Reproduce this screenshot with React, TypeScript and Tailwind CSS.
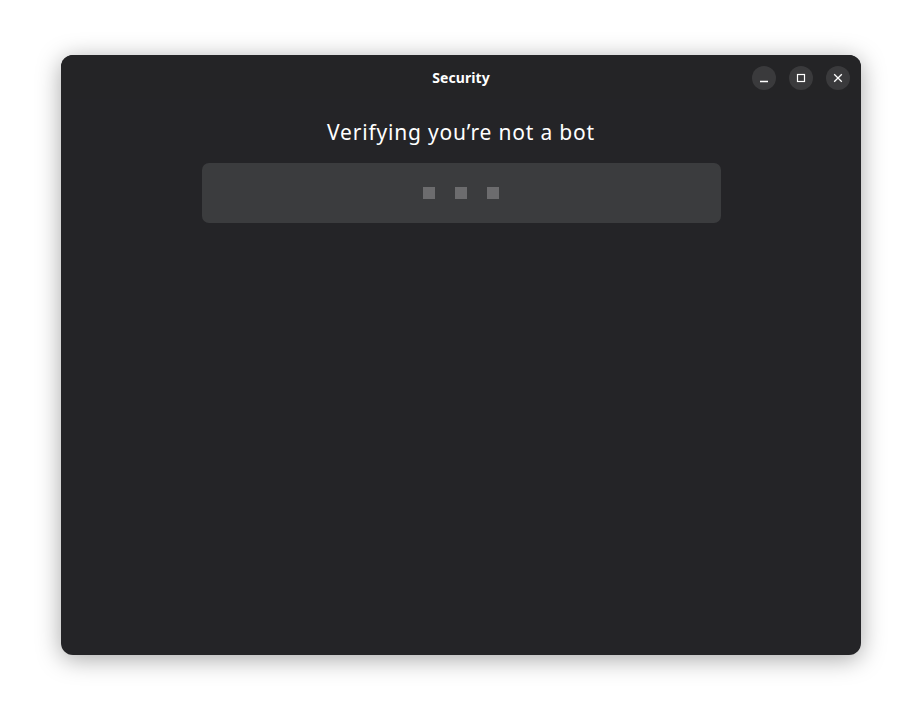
export default function App() {
  return (
    <div className="w-[922px] h-[722px] bg-white flex items-start justify-center pt-[55px]" style={{ fontFamily: '"Noto Sans", sans-serif' }}>
      {/* Window */}
      <div className="w-[800px] h-[600px] rounded-[12px] bg-[#242427] shadow-[0_4px_24px_rgba(0,0,0,0.35)] flex flex-col overflow-hidden">
        {/* Header bar */}
        <div className="h-[44px] flex items-center relative bg-[#242426]">
          <div className="flex-1 text-center text-[14px] font-bold text-white tracking-[0.1px]">Security</div>
          <div className="absolute right-[11px] top-[11px] flex gap-[13px]">
            <button className="w-[24px] h-[24px] rounded-full bg-[#3a3a3c] flex items-center justify-center text-white">
              <svg width="10" height="10" viewBox="0 0 10 10"><path d="M1 8.5h8" stroke="currentColor" strokeWidth="1.3" /></svg>
            </button>
            <button className="w-[24px] h-[24px] rounded-full bg-[#3a3a3c] flex items-center justify-center text-white">
              <svg width="10" height="10" viewBox="0 0 10 10"><rect x="1.5" y="1.5" width="7" height="7" fill="none" stroke="currentColor" strokeWidth="1.2" /></svg>
            </button>
            <button className="w-[24px] h-[24px] rounded-full bg-[#3a3a3c] flex items-center justify-center text-white">
              <svg width="10" height="10" viewBox="0 0 10 10"><path d="M1.2 1.2l7.6 7.6M8.8 1.2l-7.6 7.6" stroke="currentColor" strokeWidth="1.3" /></svg>
            </button>
          </div>
        </div>

        {/* Content */}
        <div className="flex flex-col items-center">
          <h1 className="mt-[19px] text-[21px] leading-[28px] text-white tracking-[0.8px]">Verifying you’re not a bot</h1>
          <div className="mt-[17px] w-[519px] h-[60px] rounded-[7px] bg-[#3b3c3e] flex items-center justify-center gap-[20px]">
            <div className="w-[12px] h-[12px] bg-[#6c6c6e]" />
            <div className="w-[12px] h-[12px] bg-[#6c6c6e]" />
            <div className="w-[12px] h-[12px] bg-[#6c6c6e]" />
          </div>
        </div>
      </div>
    </div>
  )
}
